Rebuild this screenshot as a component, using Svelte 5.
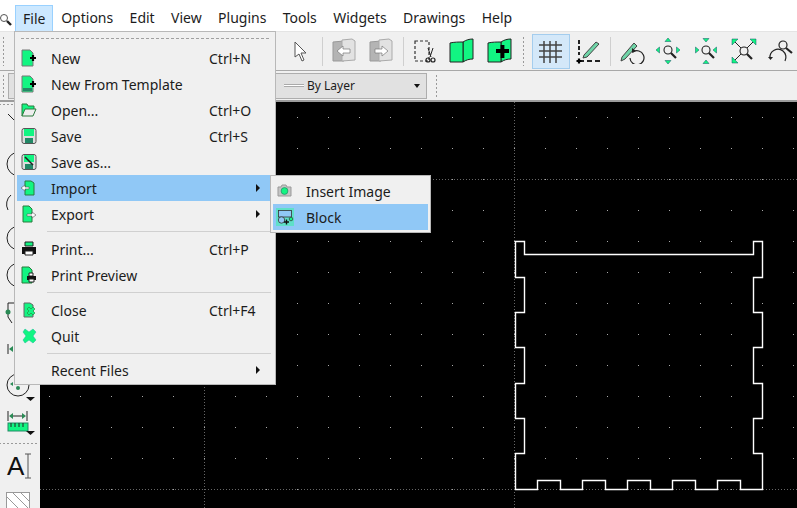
<script>
  const G = '#12f582';
  const plus = (x, y, r = 3) =>
    `<path d="M${x - r} ${y}h${2 * r}M${x} ${y - r}v${2 * r}" stroke="#000" stroke-width="2.2"/>`;
  const mag = (x, y) =>
    `<circle cx="${x}" cy="${y}" r="4" fill="none" stroke="#222" stroke-width="1.1"/><path d="M${x + 3} ${y + 3}l5 5" stroke="#222" stroke-width="2.2"/>`;
  const tri = (pts) => `<path d="M${pts}z" fill="${G}" stroke="#156" stroke-width=".5"/>`;
  const book = `<path d="M14 4c3-2 6-3 10-3v20c-4 0-7 1-10 3z" fill="${G}" stroke="#222"/><path d="M1 5c4-1 9-1 13-1v20H1z" fill="${G}" stroke="#222"/>`;

  const icons = {
    new: `<path d="M2 1h8l3 3v13H2z" fill="${G}" stroke="#777"/>${plus(13, 9)}`,
    template: `<path d="M2 1h8l3 3v13H2z" fill="${G}" stroke="#777"/><path d="M3 13h9v3H3z" fill="#286"/>${plus(13, 9)}`,
    open: `<path d="M2 15V3h5l1 2h6v3" fill="${G}" stroke="#2a7a3c"/><path d="M2 15l3-7h11l-3 7z" fill="#eee" stroke="#2a7a3c"/>`,
    save: `<rect x="2" y="1.5" width="14" height="15" rx="2" fill="#ddd" stroke="#555"/><rect x="4" y="2" width="10" height="7" fill="${G}"/><rect x="5" y="11" width="8" height="5" fill="#286"/>`,
    saveas: `<rect x="2" y="1.5" width="14" height="15" rx="2" fill="#ddd" stroke="#555"/><rect x="4" y="2" width="10" height="7" fill="${G}"/><rect x="5" y="11" width="8" height="5" fill="#286"/><path d="M5 4l8 8" stroke="#222" stroke-width="1.6"/>`,
    import: `<path d="M5 2h6l3 2v12H5z" fill="${G}" stroke="#2a7a3c"/><path d="M1 9l4-3v2h4v2H5v2z" fill="#fff" stroke="#555" stroke-width=".6"/>`,
    export: `<path d="M3 1h6l3 3v13H3z" fill="${G}" stroke="#2a7a3c"/><path d="M16 10l-4-3v2H7v2h5v2z" fill="#fff" stroke="#555" stroke-width=".6"/>`,
    print: `<path d="M5 2h8v4H5z" fill="${G}" stroke="#222"/><path d="M2 7h14v7H2z" fill="#111"/><path d="M5 11h8v4H5z" fill="#fff" stroke="#222"/>`,
    preview: `<path d="M2 1h7l3 3v13H2z" fill="${G}" stroke="#2a7a3c"/><path d="M9 7h4v3H9z" fill="#fff" stroke="#222"/><path d="M7 10h9v4H7z" fill="#111"/><path d="M9 13h5v3H9z" fill="#fff" stroke="#222"/>`,
    close: `<path d="M4 2h6l3 2v12H4z" fill="${G}" stroke="#666"/><path d="M9 6l2 2 2-2 2 2-2 2 2 2-2 2-2-2-2 2-2-2 2-2-2-2z" fill="${G}" stroke="#2a7a3c" stroke-width=".6"/>`,
    quit: `<path d="M3 5l2-3 4 3 4-3 3 3-3 4 3 4-3 3-4-3-4 3-2-3 3-4z" fill="${G}" stroke="#1b9" stroke-width=".5"/>`,
    image: `<path d="M2 5h3l1-2h4l1 2h4v9H2z" fill="#c4c4c4" stroke="#999"/><circle cx="8.5" cy="9" r="3.400" fill="${G}" stroke="#286" stroke-width=".7"/>`,
    block: `<rect x="0" y="0" width="18" height="18" fill="#5fe0c8"/><rect x="2.500" y="2.500" width="13" height="6.500" fill="#90c8f6" stroke="#333" stroke-width=".8"/><circle cx="5.500" cy="12" r="3.200" fill="#90c8f6" stroke="#333" stroke-width=".8"/><circle cx="15" cy="11" r="1.800" fill="${G}" stroke="#333" stroke-width=".7"/><path d="M8 14h5M10.500 11.500v5" stroke="#111" stroke-width="1.400"/>`,

    cursor: `<path d="M7 4l0 15 4-3 3 7 2-1-3-7h5z" fill="#fff" stroke="#555"/>`,
    copyl: `<path d="M2 4l11-1v20H2z" fill="#b4b4b4" stroke="#999"/><path d="M11 2l10-1 3 2v19l-13 1z" fill="#e2e2e2" stroke="#aaa"/><path d="M6 13l6-5v3h7v4h-7v3z" fill="#fff" stroke="#777" stroke-width=".7"/>`,
    copyr: `<path d="M2 4l11-1v20H2z" fill="#b4b4b4" stroke="#999"/><path d="M11 2l10-1 3 2v19l-13 1z" fill="#e2e2e2" stroke="#aaa"/><path d="M20 13l-6-5v3H7v4h7v3z" fill="#fff" stroke="#777" stroke-width=".7"/>`,
    cut: `<path d="M3 3h14v20H3z" fill="none" stroke="#333" stroke-width="1.200" stroke-dasharray="3 2"/><path d="M16 10l3 9M21 10l-3 9" stroke="#222"/><circle cx="16" cy="22" r="2" fill="none" stroke="#222" stroke-width="1.200"/><circle cx="21" cy="22" r="2" fill="none" stroke="#222" stroke-width="1.200"/>`,
    pages: book,
    pagesadd: `${book}<path d="M9 13h13M15.500 7v13" stroke="#000" stroke-width="3.800"/>`,
    grid: `<path d="M6 3v22M12 3v22M18 3v22M1 7h23M1 13h23M1 19h23" stroke="#444" stroke-width="1.500"/>`,
    ortho: `<path d="M4 2v15" stroke="#222" stroke-width="2" stroke-dasharray="4 2"/><path d="M4 23h21" stroke="#222" stroke-width="2" stroke-dasharray="5 3"/>${plus(4, 23, 2.5)}<path d="M9 17L21 4l3 2-12 13-4 1z" fill="#6fd5a8" stroke="#444"/>`,
    redraw: `<path d="M3 19L15 5l3 3L6 21l-4 2z" fill="#6fd5a8" stroke="#444"/><path d="M14 14a7 7 0 1 1-3 6" fill="none" stroke="#222" stroke-width="1.200"/><path d="M13 10l4 3-4 2z" fill="#222"/>`,
    zoomin: `${mag(12, 12)}${tri('12 0l3 3.5H9')}${tri('12 26l3-3.5H9')}${tri('0 12l3.5-3v6')}${tri('24 12l-3.5-3v6')}`,
    zoomout: `${mag(12, 12)}${tri('12 4l3-3.5H9')}${tri('12 22l3 3.5H9')}${tri('5 12l-3.5-3v6')}${tri('19 12l3.5-3v6')}`,
    zoomauto: `${mag(13, 13)}${tri('1 1h6l-6 6')}${tri('25 1h-6l6 6')}${tri('1 25h6l-6-6')}<path d="M4 4l6 6M22 4l-6 6M4 22l6-6" stroke="#222"/>`,
    zoomprev: `<circle cx="15" cy="7" r="4" fill="none" stroke="#222" stroke-width="1.200"/><path d="M18 10l6 5" stroke="#222" stroke-width="2.200"/><path d="M2 20a8 8 0 0 1 13-7 8 8 0 0 1 2 10" fill="none" stroke="#222" stroke-width="1.200"/><path d="M0 19h5l-2.500 3z" fill="#222"/>`,

    line: `<path d="M8 6l8 8" stroke="#222"/>`,
    circle: `<circle cx="19" cy="19" r="12" fill="none" stroke="#222"/>`,
    arc: `<path d="M8 28a12 12 0 0 1 3-15" fill="none" stroke="#222"/>`,
    node: `<path d="M16 10H8v14l4 6" fill="none" stroke="#222"/><circle cx="8" cy="19" r="2.500" fill="#2a8a55"/>`,
    dimh: `<path d="M8 14v10" stroke="#222"/><path d="M9 19l4-3v6z" fill="#2a8a55"/>`,
    snap: `<circle cx="18" cy="18" r="11" fill="none" stroke="#222"/><path d="M13 15l-3 2 3 2z" fill="#2a8a55"/><circle cx="18" cy="21" r="2" fill="#2a8a55"/><path d="M26 30h9l-4.500 4z" fill="#111"/>`,
    dim: `<path d="M8 7v10M27 7v10M11 12h13" stroke="#222"/><path d="M9 12l4-3v6zM26 12l-4-3v6z" fill="#2a8a55"/><rect x="8" y="19" width="20" height="8" fill="${G}" stroke="#286"/><path d="M11 19v4M15 19v4M19 19v4M23 19v4" stroke="#222"/><path d="M26 27h9l-4.500 4z" fill="#111"/>`
  };

  const menubar = ['Options', 'Edit', 'View', 'Plugins', 'Tools', 'Widgets', 'Drawings', 'Help'];

  const fileMenu = [
    { icon: 'new', label: 'New', key: 'Ctrl+N' },
    { icon: 'template', label: 'New From Template' },
    { icon: 'open', label: 'Open...', key: 'Ctrl+O' },
    { icon: 'save', label: 'Save', key: 'Ctrl+S' },
    { icon: 'saveas', label: 'Save as...' },
    { icon: 'import', label: 'Import', sub: true, active: true },
    { icon: 'export', label: 'Export', sub: true },
    { sep: true },
    { icon: 'print', label: 'Print...', key: 'Ctrl+P' },
    { icon: 'preview', label: 'Print Preview' },
    { sep: true },
    { icon: 'close', label: 'Close', key: 'Ctrl+F4' },
    { icon: 'quit', label: 'Quit' },
    { sep: true, tight: true },
    { label: 'Recent Files', sub: true }
  ];

  const sideTools = ['line', 'circle', 'arc', 'circle', 'circle', 'node', 'dimh', 'snap', 'dim'];

  // grid of the drawing, in page coordinates
  const gridX = [];
  for (let k = -5; k < 20; k++) gridX.push(Math.round(204 + 31.02 * k));
  const gridY = [];
  for (let k = 0; k < 13; k++) gridY.push(117 + 31 * k);

  const outline =
    'M515.5 241.5H524.5V254.5H753.5V241.5H762.5V277.5H753.5V312.5H762.5V347.5H753.5V383.5H762.5V418.5H753.5V453.5H762.5V489.5' +
    'H740.5V480.5H717.5V489.5H695.5V480.5H672.5V489.5H650.5V480.5H627.5V489.5H605.5V480.5H582.5V489.5H560.5V480.5H537.5V489.5H515.5' +
    'V453.5H524.5V418.5H515.5V383.5H524.5V347.5H515.5V312.5H524.5V277.5H515.5Z';
</script>

{#snippet tool(name, cls = '')}
  <div class="tool {cls}">
    <svg width="26" height="26" viewBox="0 0 26 26">{@html icons[name]}</svg>
  </div>
{/snippet}

<div class="app">
  <div class="menubar">
    <svg class="finder" width="14" height="14" viewBox="0 0 14 14">
      <circle cx="4" cy="5" r="3.500" fill="#fff" stroke="#555" />
      <path d="M7 8l4 4" stroke="#222" stroke-width="2.400" />
    </svg>
    <div class="menu-title open">File</div>
    {#each menubar as title}
      <div class="menu-title">{title}</div>
    {/each}
  </div>

  <div class="toolbar top">
    <div class="handle"></div>
    <div class="tools first">
      {@render tool('cursor')}
      <div class="sep"></div>
      {@render tool('copyl')}
      {@render tool('copyr')}
      <div class="sep"></div>
      {@render tool('cut')}
      {@render tool('pages')}
      {@render tool('pagesadd')}
    </div>
    <div class="handle second"></div>
    <div class="tools">
      {@render tool('grid', 'checked')}
      {@render tool('ortho')}
      <div class="sep"></div>
      {@render tool('redraw')}
      {@render tool('zoomin')}
      {@render tool('zoomout')}
      {@render tool('zoomauto')}
      {@render tool('zoomprev')}
    </div>
  </div>

  <div class="toolbar pen">
    <div class="handle"></div>
    <div class="combo small"></div>
    <div class="combo layer">
      <span class="swatch"></span>
      <span>By Layer</span>
      <span class="caret"></span>
    </div>
    <div class="handle"></div>
  </div>

  <div class="main">
    <div class="sidebar">
      <div class="hhandle"></div>
      {#each sideTools as name}
        <div class="side-tool">
          <svg width="38" height="37" viewBox="0 0 38 37">{@html icons[name]}</svg>
        </div>
      {/each}
      <div class="hhandle low"></div>
      <div class="text-tool">
        <span class="big-a">A</span>
        <svg width="8" height="26" viewBox="0 0 8 26">
          <path d="M1 1h6M4 1v24M1 25h6" stroke="#555" fill="none" />
        </svg>
      </div>
      <svg class="hatch" width="24" height="16" viewBox="0 0 24 16">
        <rect x=".5" y=".5" width="23" height="20" fill="#fff" stroke="#999" />
        <path d="M0 4l12 12M6 0l16 16M14 0l10 10" stroke="#999" />
      </svg>
    </div>

    <svg class="canvas" viewBox="40 102 757 406" width="757" height="406">
      {#each gridX as x}
        {#each gridY as y}
          <rect {x} {y} width="1" height="1" fill="#aaa" />
        {/each}
      {/each}
      <g stroke="#666" stroke-dasharray="1 2">
        <path d="M204.500 102V508M514.500 102V508" />
        <path d="M40 179.500H797M40 489.500H797" />
      </g>
      <path d={outline} fill="none" stroke="#fff" stroke-width="1.400" />
    </svg>
  </div>

  <div class="popup file-menu">
    <div class="tearoff"></div>
    {#each fileMenu as item}
      {#if item.sep}
        <div class="menu-sep" class:tight={item.tight}></div>
      {:else}
        <div class="row" class:active={item.active}>
          <span class="row-icon">
            {#if item.icon}
              <svg width="18" height="18" viewBox="0 0 18 18">{@html icons[item.icon]}</svg>
            {/if}
          </span>
          <span class="row-label">{item.label}</span>
          {#if item.key}<span class="row-key">{item.key}</span>{/if}
          {#if item.sub}<span class="arrow"></span>{/if}
        </div>
      {/if}
    {/each}
  </div>

  <div class="popup sub-menu">
    <div class="row">
      <span class="row-icon"><svg width="18" height="18" viewBox="0 0 18 18">{@html icons.image}</svg></span>
      <span class="row-label">Insert Image</span>
    </div>
    <div class="row active">
      <span class="row-icon"><svg width="18" height="18" viewBox="0 0 18 18">{@html icons.block}</svg></span>
      <span class="row-label">Block</span>
    </div>
  </div>
</div>

<style>
  :global(body) {
    margin: 0;
    background: #000;
  }

  .app {
    position: relative;
    width: 797px;
    height: 508px;
    overflow: hidden;
    font-family: "Noto Sans", "Open Sans", sans-serif;
    font-size: 14px;
    color: #1c1c1c;
    background: #f0f0f0;
  }

  .menubar {
    display: flex;
    align-items: flex-end;
    height: 31px;
    background: #fff;
    box-sizing: border-box;
    padding-left: 15px;
  }

  .finder {
    position: absolute;
    left: 0;
    top: 13px;
  }

  .menu-title {
    box-sizing: border-box;
    height: 26px;
    line-height: 26px;
    padding: 0 8.200px;
  }

  .menu-title.open {
    width: 38px;
    padding: 0 0 0 7px;
    background: #cce8ff;
    border: 1px solid #99d1ff;
    border-bottom: none;
    line-height: 25px;
  }

  .toolbar {
    display: flex;
    align-items: center;
    box-sizing: border-box;
    background: #f0f0f0;
  }

  .toolbar.top {
    height: 40px;
    border-top: 1px solid #e4e4e4;
    border-bottom: 1px solid #a8a8a8;
  }

  .toolbar.pen {
    height: 31px;
    border-bottom: 2px solid #9c9c9c;
  }

  .handle {
    flex: none;
    width: 3px;
    height: 80%;
    margin-left: 2px;
    background: radial-gradient(circle, #999 0.8px, transparent 1px) 0 0 / 3px 4px;
  }

  .handle.second {
    margin-left: 4px;
    margin-right: 7px;
  }

  .tools {
    display: flex;
    align-items: center;
  }

  .tools.first {
    margin-left: 277px;
  }

  .tool {
    box-sizing: border-box;
    width: 37.400px;
    height: 35px;
    display: flex;
    align-items: center;
    justify-content: center;
    border: 1px solid transparent;
  }

  .tool.checked {
    background: #d4e8f9;
    border-color: #a4cdee;
  }

  .sep {
    width: 1px;
    height: 29px;
    margin: 0 2.500px;
    background: #cfcfcf;
  }

  .combo {
    box-sizing: border-box;
    height: 26px;
    background: #e1e1e1;
    border: 1px solid #adadad;
    display: flex;
    align-items: center;
  }

  .combo.small {
    width: 60px;
    margin-left: 3px;
  }

  .combo.layer {
    width: 200px;
    margin-left: 159px;
    margin-right: 6px;
    padding-left: 56px;
    font-size: 12px;
    position: relative;
  }

  .swatch {
    width: 20px;
    height: 3px;
    margin-right: 3px;
    background: #fff;
    border-top: 1px solid #aaa;
    border-bottom: 1px solid #aaa;
    box-sizing: border-box;
  }

  .caret {
    position: absolute;
    right: 6px;
    top: 10px;
    border: 4px solid transparent;
    border-top: 4px solid #111;
    border-left-width: 3.500px;
    border-right-width: 3.500px;
  }

  .main {
    display: flex;
    height: 406px;
  }

  .sidebar {
    flex: none;
    width: 40px;
    background: #f0f0f0;
    display: flex;
    flex-direction: column;
    overflow: hidden;
  }

  .hhandle {
    flex: none;
    height: 6px;
    background: radial-gradient(circle, #999 0.8px, transparent 1px) 2px 1px / 4px 3px repeat-x;
  }

  .hhandle.low {
    height: 7px;
    margin-top: -1px;
    background-position: 2px 2px;
    width: 37px;
  }

  .side-tool {
    flex: none;
    height: 37px;
  }

  .side-tool svg {
    display: block;
    overflow: visible;
  }

  .text-tool {
    flex: none;
    height: 38px;
    display: flex;
    align-items: center;
    padding-left: 7px;
  }

  .big-a {
    font-family: "Liberation Sans", sans-serif;
    font-size: 26px;
    line-height: 1;
    color: #111;
  }

  .hatch {
    flex: none;
    margin: 7px 0 0 6px;
  }

  .canvas {
    flex: none;
    display: block;
    background: #000;
  }

  .popup {
    position: absolute;
    box-sizing: border-box;
    background: #f0f0f0;
    border: 1px solid #b8b8b8;
    padding: 2px;
  }

  .file-menu {
    left: 14px;
    top: 31px;
    width: 262px;
    height: 354px;
  }

  .sub-menu {
    left: 270px;
    top: 175px;
    width: 161px;
    height: 58px;
  }

  .tearoff {
    height: 11px;
    margin: 0 4px;
    background: repeating-linear-gradient(90deg, #a0a0a0 0 3px, transparent 3px 5px) 0 4px / 100% 1px no-repeat;
  }

  .row {
    position: relative;
    display: flex;
    align-items: center;
    height: 26px;
  }

  .row.active {
    background: #90c8f6;
  }

  .row-icon {
    flex: none;
    display: flex;
    width: 34px;
    padding-left: 3px;
    box-sizing: border-box;
  }

  .sub-menu .row-icon {
    width: 33px;
    padding-left: 3px;
  }

  .row-label {
    flex: 1;
  }

  .row-key {
    position: absolute;
    left: 192px;
  }

  .arrow {
    position: absolute;
    left: 239px;
    top: 9px;
    border-left: 4px solid #111;
    border-top: 4px solid transparent;
    border-bottom: 4px solid transparent;
  }

  .menu-sep {
    height: 9px;
    margin-left: 30px;
    margin-right: 2px;
    background: linear-gradient(#d0d0d0, #d0d0d0) 0 4px / 100% 1px no-repeat;
  }

  .menu-sep.tight {
    height: 8px;
  }
</style>
